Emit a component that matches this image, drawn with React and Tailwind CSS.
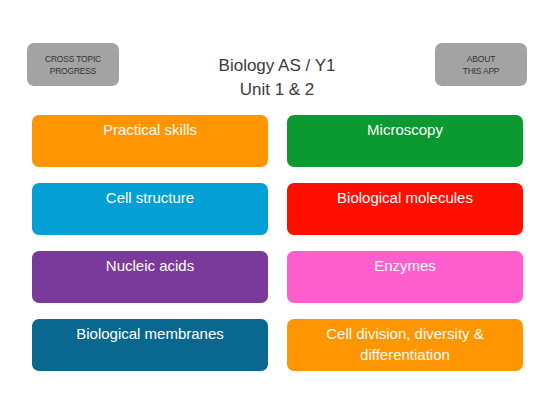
const topics = [
  { name: 'Practical skills', color: 'bg-[#ff9500]' },
  { name: 'Microscopy', color: 'bg-[#0b9a2f]' },
  { name: 'Cell structure', color: 'bg-[#03a0d6]' },
  { name: 'Biological molecules', color: 'bg-[#ff0f00]' },
  { name: 'Nucleic acids', color: 'bg-[#793a9c]' },
  { name: 'Enzymes', color: 'bg-[#ff5fce]' },
  { name: 'Biological membranes', color: 'bg-[#0a6790]' },
  { name: 'Cell division, diversity & differentiation', color: 'bg-[#ff9500]' },
];

function GreyButton({ lines }) {
  return (
    <button className="flex h-[43px] w-[92px] flex-col items-center justify-center rounded-[7px] bg-[#a3a3a3] text-[8.5px] leading-[12px] tracking-[-0.2px] text-[#333]">
      {lines.map((l) => (
        <span key={l}>{l}</span>
      ))}
    </button>
  );
}

export default function App() {
  return (
    <div className="min-h-[414px] w-[552px] bg-white font-['Liberation_Sans',Arial,sans-serif]">
      <header className="flex items-start justify-between pl-[27px] pr-[25px] pt-[43px]">
        <GreyButton lines={['CROSS TOPIC', 'PROGRESS']} />
        <div className="mt-[11px] text-center text-[17px] leading-[24px] text-[#3a3a3a]">
          <div>Biology AS / Y1</div>
          <div>Unit 1 &amp; 2</div>
        </div>
        <GreyButton lines={['ABOUT', 'THIS APP']} />
      </header>

      <main className="mt-[13px] grid grid-cols-[236px_236px] gap-x-[19px] gap-y-[16px] pl-[32px]">
        {topics.map((t) => (
          <button
            key={t.name}
            className={`${t.color} h-[52px] rounded-[7px] px-[30px] pt-[4px] text-center text-[15px] leading-[21px] text-white flex items-start justify-center`}
          >
            {t.name}
          </button>
        ))}
      </main>
    </div>
  );
}
